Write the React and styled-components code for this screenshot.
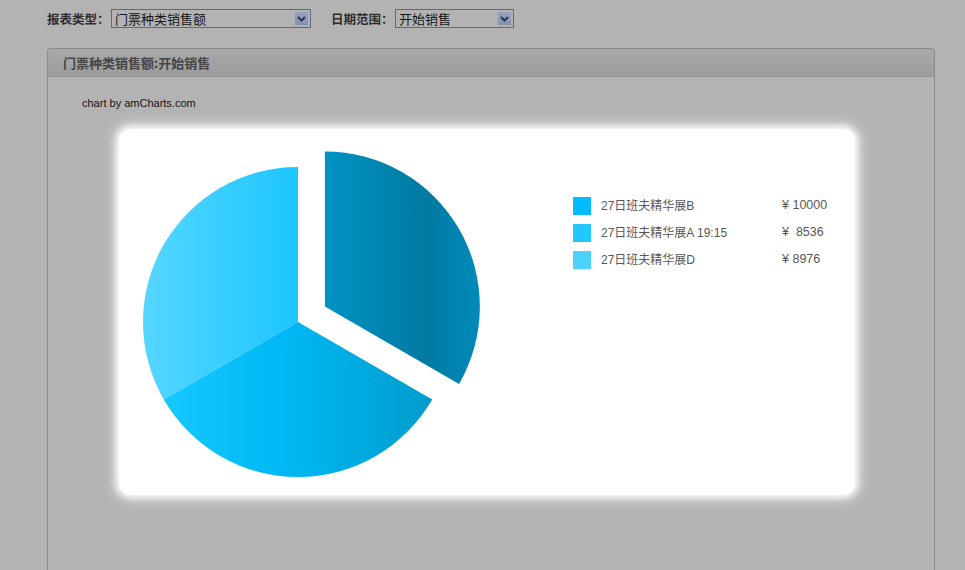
import React from "react";
import styled, { createGlobalStyle } from "styled-components";

const Global = createGlobalStyle`
  html, body { margin: 0; padding: 0; background: #b3b3b3; }
  body { font-family: "Liberation Sans", Arial, "Noto Sans CJK SC", sans-serif; width: 965px; height: 570px; overflow: hidden; }
`;

const Page = styled.div`
  width: 965px;
  height: 570px;
  background: #b3b3b3;
  padding: 9px 31px 0 47px;
  box-sizing: border-box;
  display: flex;
  flex-direction: column;
  overflow: hidden;
`;

const Toolbar = styled.div`
  display: flex;
  align-items: center;
  height: 19px;
  flex: none;
`;

const Label = styled.span`
  font-family: "Noto Sans CJK SC", sans-serif;
  font-weight: 700;
  font-size: 12.5px;
  color: #2e2e2e;
  width: 64px;
  margin-left: ${p => p.$ml || 0}px;
  line-height: 19px;
  white-space: nowrap;
`;

const Select = styled.div`
  width: ${p => p.$w}px;
  height: 19px;
  box-sizing: border-box;
  border: 1px solid #5d6b7e;
  display: flex;
  align-items: center;
  justify-content: space-between;
  padding-left: 3px;
  font-family: "Noto Sans CJK SC", sans-serif;
  font-size: 13px;
  color: #151515;
  background: #b3b3b3;
`;

const Arrow = styled.div`
  width: 15px;
  height: 15px;
  margin-right: 1px;
  background: linear-gradient(#9aa3bc, #8690ad);
  border: 1px solid #a9b0c6;
  box-sizing: border-box;
  display: flex;
  align-items: center;
  justify-content: center;
`;

const Panel = styled.div`
  margin-top: 20px;
  width: 888px;
  flex: 1;
  border: 1px solid #8c8c8c;
  border-bottom: none;
  border-radius: 4px 4px 0 0;
  box-sizing: border-box;
  background: #b3b3b3;
`;

const PanelHeader = styled.div`
  height: 27px;
  background: linear-gradient(#a9a9a9, #9c9c9c);
  border-bottom: 1px solid #989898;
  border-radius: 3px 3px 0 0;
  display: flex;
  align-items: center;
  padding-left: 15px;
  font-family: "Noto Sans CJK SC", sans-serif;
  font-weight: 700;
  font-size: 13px;
  color: #454545;
`;

const PanelBody = styled.div`
  padding: 20px 0 0 34px;
`;

const Credit = styled.div`
  font-family: "Liberation Sans", Arial, sans-serif;
  font-size: 11px;
  color: #151515;
  height: 13px;
  line-height: 13px;
`;

const Card = styled.div`
  margin: 19px 0 0 37px;
  width: 736px;
  height: 366px;
  background: #fff;
  border-radius: 12px;
  box-shadow: 0 0 6px 3px rgba(255,255,255,0.9), 0 0 14px 6px rgba(255,255,255,0.45);
  display: flex;
`;

const Chart = styled.svg`
  width: 454px;
  height: 366px;
  flex: none;
`;

const Legend = styled.div`
  margin-top: 68px;
  display: flex;
  flex-direction: column;
  gap: 9px;
`;

const Row = styled.div`
  display: flex;
  align-items: center;
  height: 18px;
  font-family: "Liberation Sans", Arial, "Noto Sans CJK SC", sans-serif;
  font-size: 12px;
  color: #575757;
`;

const Marker = styled.div`
  width: 18px;
  height: 18px;
  background: ${p => p.$c};
  flex: none;
`;

const Name = styled.span`
  width: 181px;
  margin-left: 10px;
  margin-top: -3px;
`;

const Value = styled.span`
  white-space: pre;
  font-size: 12.5px;
  margin-top: -2px;
`;

const Chevron = () => (
  <svg width="9" height="6" viewBox="0 0 9 6">
    <path d="M1 1 L4.5 4.5 L8 1" stroke="#2b3652" strokeWidth="2" fill="none" />
  </svg>
);

const legend = [
  { c: "#00bbff", name: "27日班夫精华展B", value: "¥ 10000" },
  { c: "#22c7ff", name: "27日班夫精华展A 19:15", value: "¥  8536" },
  { c: "#4dd2ff", name: "27日班夫精华展D", value: "¥ 8976" },
];

export default function App() {
  return (
    <>
      <Global />
      <Page>
        <Toolbar>
          <Label>报表类型：</Label>
          <Select $w={200}>
            门票种类销售额
            <Arrow><Chevron /></Arrow>
          </Select>
          <Label $ml={20}>日期范围：</Label>
          <Select $w={119}>
            开始销售
            <Arrow><Chevron /></Arrow>
          </Select>
        </Toolbar>
        <Panel>
          <PanelHeader>门票种类销售额:开始销售</PanelHeader>
          <PanelBody>
            <Credit>chart by amCharts.com</Credit>
            <Card>
              <Chart viewBox="0 0 454 366">
                <defs>
                  <linearGradient id="gL" gradientUnits="userSpaceOnUse" x1="24" y1="0" x2="179" y2="0">
                    <stop offset="0" stopColor="#55d6ff" />
                    <stop offset="1" stopColor="#1cc6ff" />
                  </linearGradient>
                  <linearGradient id="gM" gradientUnits="userSpaceOnUse" x1="44" y1="0" x2="314" y2="0">
                    <stop offset="0" stopColor="#16c7ff" />
                    <stop offset="0.45" stopColor="#00b8f4" />
                    <stop offset="1" stopColor="#009ccc" />
                  </linearGradient>
                  <linearGradient id="gD" gradientUnits="userSpaceOnUse" x1="206" y1="0" x2="361" y2="0">
                    <stop offset="0" stopColor="#0093c3" />
                    <stop offset="0.65" stopColor="#007aa2" />
                    <stop offset="1" stopColor="#008ab9" />
                  </linearGradient>
                </defs>
                <path d="M179,193 L44.77,270.5 A155,155 0 0 1 179,38 Z" fill="url(#gL)" />
                <path d="M179,193 L313.23,270.5 A155,155 0 0 1 44.77,270.5 Z" fill="url(#gM)" />
                <path d="M205.85,177.5 L205.85,22.5 A155,155 0 0 1 340.08,255 Z" fill="url(#gD)" />
              </Chart>
              <Legend>
                {legend.map(l => (
                  <Row key={l.name}>
                    <Marker $c={l.c} />
                    <Name>{l.name}</Name>
                    <Value>{l.value}</Value>
                  </Row>
                ))}
              </Legend>
            </Card>
          </PanelBody>
        </Panel>
      </Page>
    </>
  );
}
